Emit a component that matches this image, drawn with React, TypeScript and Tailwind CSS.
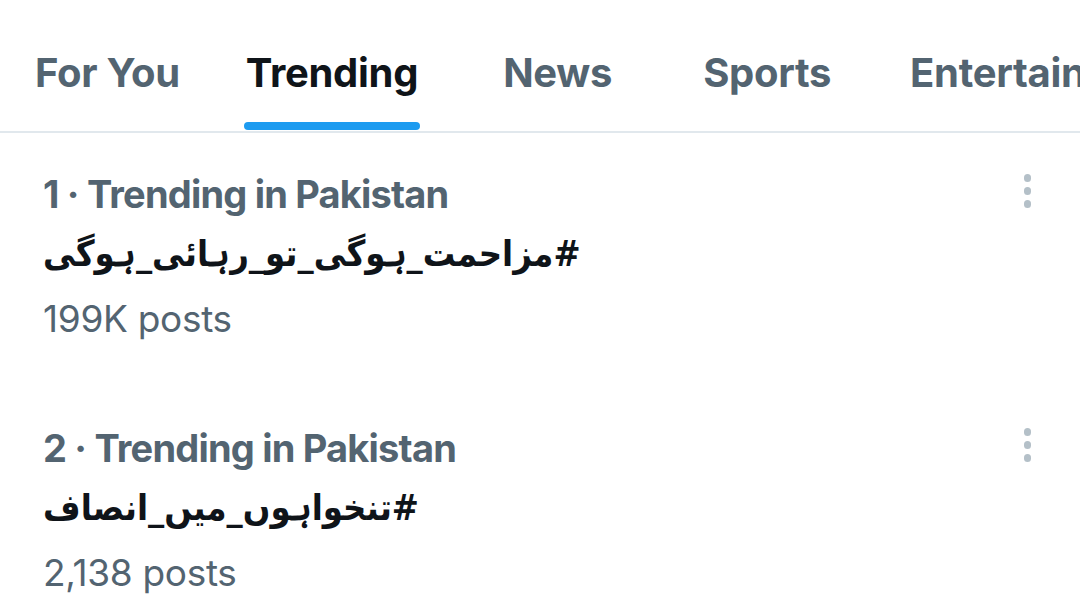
import React from "react";

const tabs = [
  { label: "For You", ml: "ml-[35px]", active: false },
  { label: "Trending", ml: "ml-[66px]", active: true },
  { label: "News", ml: "ml-[85px]", active: false },
  { label: "Sports", ml: "ml-[91px]", active: false },
  { label: "Entertainment", ml: "ml-[79px]", active: false },
];

const trends = [
  { rank: 1, tag: "#مزاحمت_ہوگی_تو_رہائی_ہوگی", posts: "199K posts" },
  { rank: 2, tag: "#تنخواہوں_میں_انصاف", posts: "2,138 posts" },
];

function Dots() {
  return (
    <div className="flex flex-col items-center gap-[5.5px] pt-[4px]">
      <span className="block w-[7.5px] h-[7.5px] rounded-full bg-[#b4c0c8]" />
      <span className="block w-[7.5px] h-[7.5px] rounded-full bg-[#b4c0c8]" />
      <span className="block w-[7.5px] h-[7.5px] rounded-full bg-[#b4c0c8]" />
    </div>
  );
}

export default function App() {
  return (
    <div className="w-[1080px] h-[606px] overflow-hidden bg-white" style={{ fontFamily: "Inter, 'DejaVu Sans', sans-serif" }}>
      <div className="flex h-[133px] border-b-[2px] border-[#e1e8ed] whitespace-nowrap overflow-hidden">
        {tabs.map((t) => (
          <div key={t.label} className={`${t.ml} flex flex-col shrink-0`}>
            <div
              className={`mt-[48px] text-[40px] leading-[50px] font-bold tracking-[-0.3px] ${
                t.active ? "text-[#0f1419]" : "text-[#536471]"
              }`}
            >
              {t.label}
            </div>
            {t.active ? (
              <div className="mt-auto mb-[1px] mx-[-2px] h-[8px] rounded-full bg-[#1d9bf0]" />
            ) : null}
          </div>
        ))}
      </div>
      {trends.map((tr) => (
        <div key={tr.rank} className="flex pl-[43px] pr-[49px] h-[254px] pt-[37px]">
          <div className="flex-1 flex flex-col">
            <div className="text-[38px] leading-[48px] font-bold tracking-[-0.8px] text-[#536471]">
              {tr.rank} · Trending in Pakistan
            </div>
            <div
              dir="rtl"
              className="self-start mt-[8px] text-[36px] leading-[56px] font-bold text-[#0f1419]"
              style={{ fontFamily: "'DejaVu Sans Condensed', 'DejaVu Sans', sans-serif", fontStretch: "condensed" }}
            >
              {tr.tag}
            </div>
            <div className="mt-[13px] text-[37px] leading-[48px] text-[#536471] tracking-[-0.3px]">
              {tr.posts}
            </div>
          </div>
          <Dots />
        </div>
      ))}
    </div>
  );
}
